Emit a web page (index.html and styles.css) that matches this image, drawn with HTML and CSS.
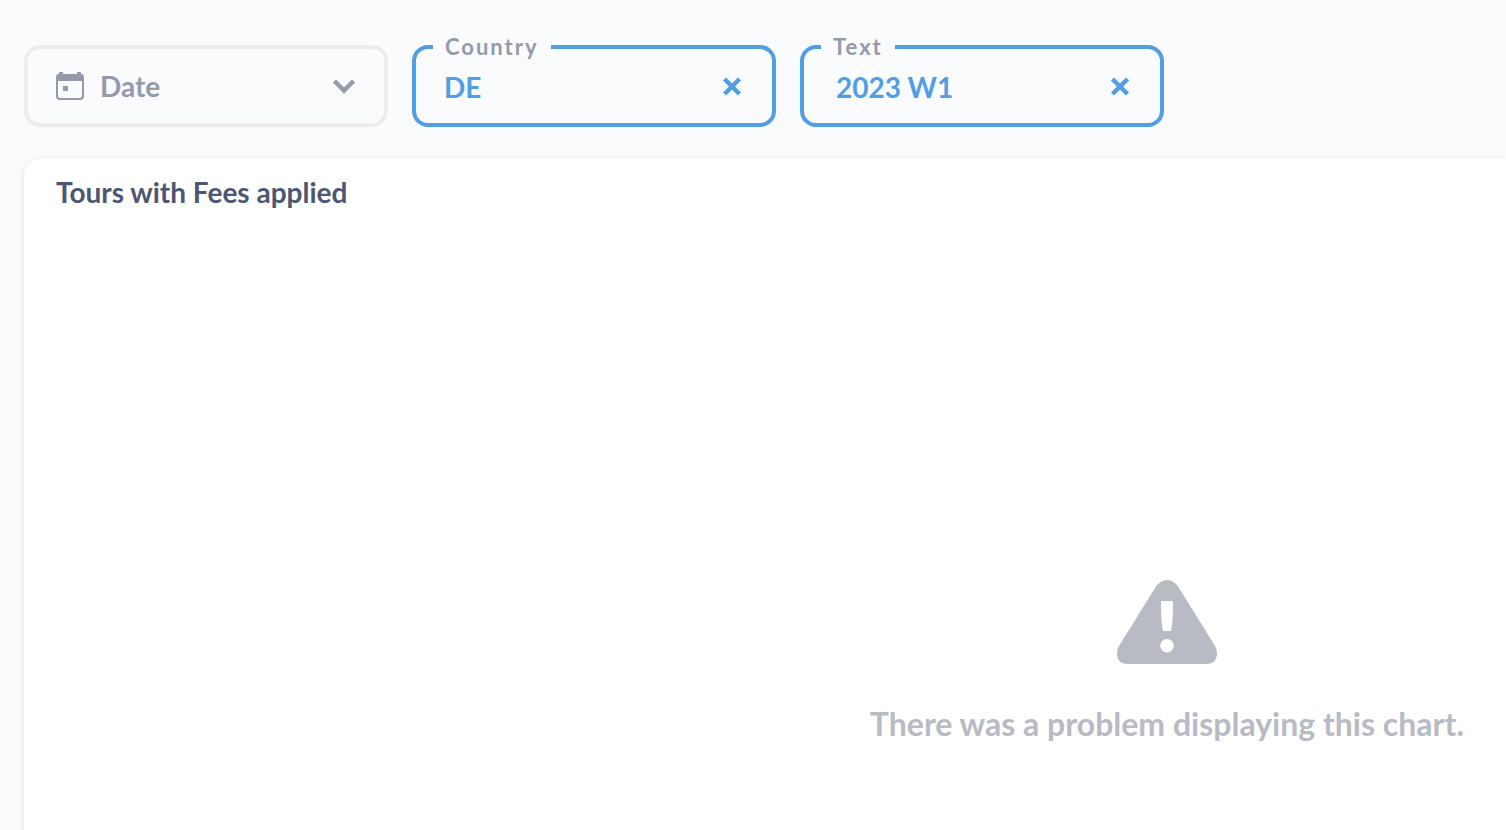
FILE: index.html
```html
<!DOCTYPE html>
<html lang="en">
<head>
  <meta charset="UTF-8">
  <meta name="viewport" content="width=device-width, initial-scale=1.0">
  <title>Tours with Fees applied</title>
  <link rel="stylesheet" href="styles.css">
</head>
<body>
  <form class="filters">
    <button type="button" class="filter filter-empty">
      <svg class="icon-calendar" viewBox="0 0 28 28" width="28" height="28" aria-hidden="true">
        <path fill="currentColor" fill-rule="evenodd" d="M3 0h4v2h14V0h4v2a3 3 0 0 1 3 3v19a4 4 0 0 1-4 4H4a4 4 0 0 1-4-4V5a3 3 0 0 1 3-3zM2 9v14.500a2.500 2.500 0 0 0 2.500 2.500h19a2.500 2.500 0 0 0 2.500-2.500V9zM7 14h5v5H7z"/>
      </svg>
      <span class="filter-name">Date</span>
      <svg class="icon-chevron" viewBox="0 0 24 16" width="24" height="16" aria-hidden="true">
        <path fill="none" stroke="currentColor" stroke-width="4.500" d="M2.500 3L12 12.500L21.500 3"/>
      </svg>
    </button>
    <fieldset class="filter filter-set">
      <legend>Country</legend>
      <div class="filter-row">
        <button type="button" class="filter-value">DE</button>
        <button type="button" class="clear" aria-label="Clear country">
          <svg viewBox="0 0 20 20" width="20" height="20" aria-hidden="true">
            <path fill="none" stroke="currentColor" stroke-width="4.500" d="M2.500 2l15 15M17.500 2l-15 15"/>
          </svg>
        </button>
      </div>
    </fieldset>
    <fieldset class="filter filter-set">
      <legend>Text</legend>
      <div class="filter-row">
        <input type="text" class="filter-value filter-input" value="2023 W1" aria-label="Text">
        <button type="button" class="clear" aria-label="Clear text">
          <svg viewBox="0 0 20 20" width="20" height="20" aria-hidden="true">
            <path fill="none" stroke="currentColor" stroke-width="4.500" d="M2.500 2l15 15M17.500 2l-15 15"/>
          </svg>
        </button>
      </div>
    </fieldset>
  </form>
  <main class="card">
    <h1>Tours with Fees applied</h1>
    <div class="error">
      <svg class="icon-warning" viewBox="0 0 100 84" width="100" height="84" aria-hidden="true">
        <path fill="currentColor" fill-rule="evenodd" d="M38 8Q43 0 50 0T62 8L98 66Q100 69 100 73V75Q99 84 89 84H11Q1 84 0 75V73Q0 69 2 66zM44 21Q44 43 46 51H54Q56 43 56 21zM50 59a6.800 6.800 0 1 0 0 13.600a6.800 6.800 0 1 0 0-13.600z"/>
      </svg>
      <p>There was a problem displaying this chart.</p>
    </div>
  </main>
</body>
</html>
```

FILE: styles.css
```css
* {
  box-sizing: border-box;
}
body {
  margin: 0;
  min-height: 100vh;
  display: flex;
  flex-direction: column;
  padding: 33px 0 0 24px;
  font-family: Lato, sans-serif;
  font-weight: 700;
  background-color: #f9fbfd;
  color: #4c5773;
}
button,
input {
  font: inherit;
  color: inherit;
  background: none;
  border: 0;
  padding: 0;
  cursor: pointer;
}
.filters {
  display: flex;
  align-items: flex-end;
  gap: 24px;
  margin-bottom: 32px;
  font-size: 28px;
}
.filter {
  width: 364px;
  min-width: 0;
  margin: 0;
  border: 4px solid #509ee3;
  border-radius: 16px;
}
.filter-empty {
  display: flex;
  align-items: center;
  height: 82px;
  padding: 0 28px;
  border-color: #eeecec;
  color: #949aab;
}
.filter-name {
  flex: 1;
  margin-left: 16px;
  text-align: left;
}
.filter-set {
  padding: 0 17px;
  color: #509ee3;
}
.filter-set legend {
  padding: 0 12px;
  font-size: 22px;
  line-height: 28px;
  letter-spacing: 2px;
  color: #949aab;
}
.filter-row {
  display: flex;
  align-items: center;
  height: 62px;
  padding: 0 13px 10px 11px;
}
.filter-value {
  flex: 1;
  min-width: 0;
  text-align: left;
}
.filter-input {
  padding-left: 4px;
}
.clear {
  display: flex;
}
.card {
  flex: 1;
  display: flex;
  flex-direction: column;
  padding: 16px 32px;
  background-color: #fff;
  border-radius: 16px 0 0 0;
  box-shadow: 0 2px 6px rgba(0, 0, 0, 0.13);
}
.card h1 {
  margin: 0;
  font-size: 28px;
  line-height: 34px;
}
.error {
  flex: 1;
  align-self: flex-end;
  display: flex;
  flex-direction: column;
  align-items: center;
  justify-content: flex-end;
  padding: 0 10px 70px 0;
  color: #b8bbc3;
}
.error p {
  margin: 40px 0 0;
  font-size: 32px;
  line-height: 40px;
}
```
